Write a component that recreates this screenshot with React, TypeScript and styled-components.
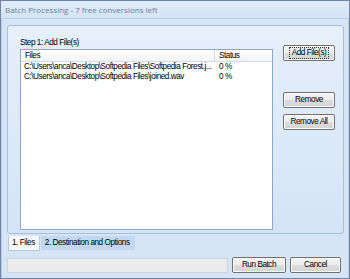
import React from 'react';
import styled, { createGlobalStyle } from 'styled-components';

const GlobalStyle = createGlobalStyle`
  html, body {
    margin: 0;
    padding: 0;
    background: #c6daf1;
  }
`;

const uiFont = `'Liberation Sans', Arial, sans-serif`;

const Window = styled.div`
  width: 350px;
  height: 279px;
  box-sizing: border-box;
  border: 1px solid #6f85a3;
  background: #c9dcf2;
  display: flex;
  flex-direction: column;
  font-family: ${uiFont};
  font-size: 8.2px;
  letter-spacing: -0.45px;
  color: #000;
  overflow: hidden;
`;

const TitleBar = styled.div`
  height: 17px;
  flex: none;
  display: flex;
  align-items: center;
  padding-left: 4px;
  background: linear-gradient(#e2ecf8, #d3e3f5);
  border-bottom: 1px solid #bcd1ea;
  color: #6c7f99;
  font-family: 'Open Sans', 'Liberation Sans', sans-serif;
  font-size: 8px;
  letter-spacing: 0;
`;

const Client = styled.div`
  flex: 1;
  display: flex;
  flex-direction: column;
  padding: 6px 4px 4px 5px;
  background: #d6e5f6;
  border-left: 1px solid #b7cde8;
  border-right: 1px solid #b7cde8;
`;

const TabPage = styled.div`
  height: 209px;
  box-sizing: border-box;
  border: 1px solid #a8bfdc;
  border-radius: 3px;
  background: linear-gradient(#e6effa, #d4e4f6);
  padding: 12px 7px 0 12px;
  display: flex;
  gap: 10px;
`;

const Column = styled.div`
  display: flex;
  flex-direction: column;
  width: 253px;
`;

const StepLabel = styled.div`
  height: 11px;
  line-height: 10px;
`;

const ListBox = styled.div`
  height: 181px;
  box-sizing: border-box;
  border: 1px solid #8ea7c6;
  background: #fff;
`;

const HeaderRow = styled.div`
  display: flex;
  height: 11px;
  line-height: 11px;
  background: linear-gradient(#ffffff, #f1f3f6);
  border-bottom: 1px solid #d6dbe3;
`;

const HeadCell = styled.div<{ $w?: number }>`
  width: ${p => (p.$w ? `${p.$w}px` : 'auto')};
  flex: ${p => (p.$w ? 'none' : '1')};
  box-sizing: border-box;
  padding-left: 4px;
  border-right: ${p => (p.$w ? '1px solid #d6dbe3' : 'none')};
`;

const Row = styled.div`
  display: flex;
  height: 10px;
  line-height: 10px;
  &:first-of-type {
    margin-top: 2px;
  }
`;

const Cell = styled.div<{ $w?: number }>`
  width: ${p => (p.$w ? `${p.$w}px` : 'auto')};
  flex: ${p => (p.$w ? 'none' : '1')};
  padding-left: 3px;
  white-space: nowrap;
  overflow: hidden;
  box-sizing: border-box;
`;

const Buttons = styled.div`
  display: flex;
  flex-direction: column;
  padding-top: 7px;
`;

const Button = styled.button<{ $w?: number; $gap?: number; $focus?: boolean }>`
  width: ${p => p.$w ?? 52}px;
  height: 16px;
  margin-top: ${p => p.$gap ?? 0}px;
  box-sizing: border-box;
  border: 1px solid #707070;
  border-radius: 2px;
  background: linear-gradient(#f4f4f4 0%, #ebebeb 50%, #dcdcdc 51%, #d4d4d4 100%);
  box-shadow: inset 0 0 0 1px #fcfcfc;
  font-family: ${uiFont};
  font-size: 8.2px;
  letter-spacing: -0.45px;
  color: #000;
  padding: 0;
  display: flex;
  align-items: center;
  justify-content: center;
  span {
    padding: 0 2px;
    line-height: 10px;
    outline: ${p => (p.$focus ? '1px dotted #333' : 'none')};
  }
`;

const Tabs = styled.div`
  display: flex;
  height: 15px;
  margin-top: 2px;
  gap: 1px;
  padding-left: 1px;
`;

const Tab = styled.div<{ $active?: boolean }>`
  padding: 0 4px 0 3px;
  height: ${p => (p.$active ? 15 : 14)}px;
  line-height: 14px;
  box-sizing: border-box;
  background: ${p => (p.$active ? '#f6f9fd' : '#c2d8f1')};
  border: 1px solid ${p => (p.$active ? '#b4c8e2' : '#c2d8f1')};
  border-top: none;
`;

const Footer = styled.div`
  display: flex;
  align-items: center;
  gap: 4px;
  margin-top: 6px;
`;

const StatusBox = styled.div`
  width: 221px;
  height: 15px;
  box-sizing: border-box;
  border: 1px solid #c8d6e6;
  background: #ececec;
`;

const files = [
  'C:\\Users\\anca\\Desktop\\Softpedia Files\\Softpedia Forest.j...',
  'C:\\Users\\anca\\Desktop\\Softpedia Files\\joined.wav',
];

export default function App() {
  return (
    <>
      <GlobalStyle />
      <Window>
        <TitleBar>Batch Processing - 7 free conversions left</TitleBar>
        <Client>
          <TabPage>
            <Column>
              <StepLabel>Step 1: Add File(s)</StepLabel>
              <ListBox>
                <HeaderRow>
                  <HeadCell $w={194}>Files</HeadCell>
                  <HeadCell>Status</HeadCell>
                </HeaderRow>
                {files.map(f => (
                  <Row key={f}>
                    <Cell $w={195}>{f}</Cell>
                    <Cell>0 %</Cell>
                  </Row>
                ))}
              </ListBox>
            </Column>
            <Buttons>
              <Button $focus><span>Add File(s)</span></Button>
              <Button $gap={31}><span>Remove</span></Button>
              <Button $gap={6}><span>Remove All</span></Button>
            </Buttons>
          </TabPage>
          <Tabs>
            <Tab $active>1. Files</Tab>
            <Tab>2. Destination and Options</Tab>
          </Tabs>
          <Footer>
            <StatusBox />
            <Button $w={54}><span>Run Batch</span></Button>
            <Button $w={51}><span>Cancel</span></Button>
          </Footer>
        </Client>
      </Window>
    </>
  );
}
